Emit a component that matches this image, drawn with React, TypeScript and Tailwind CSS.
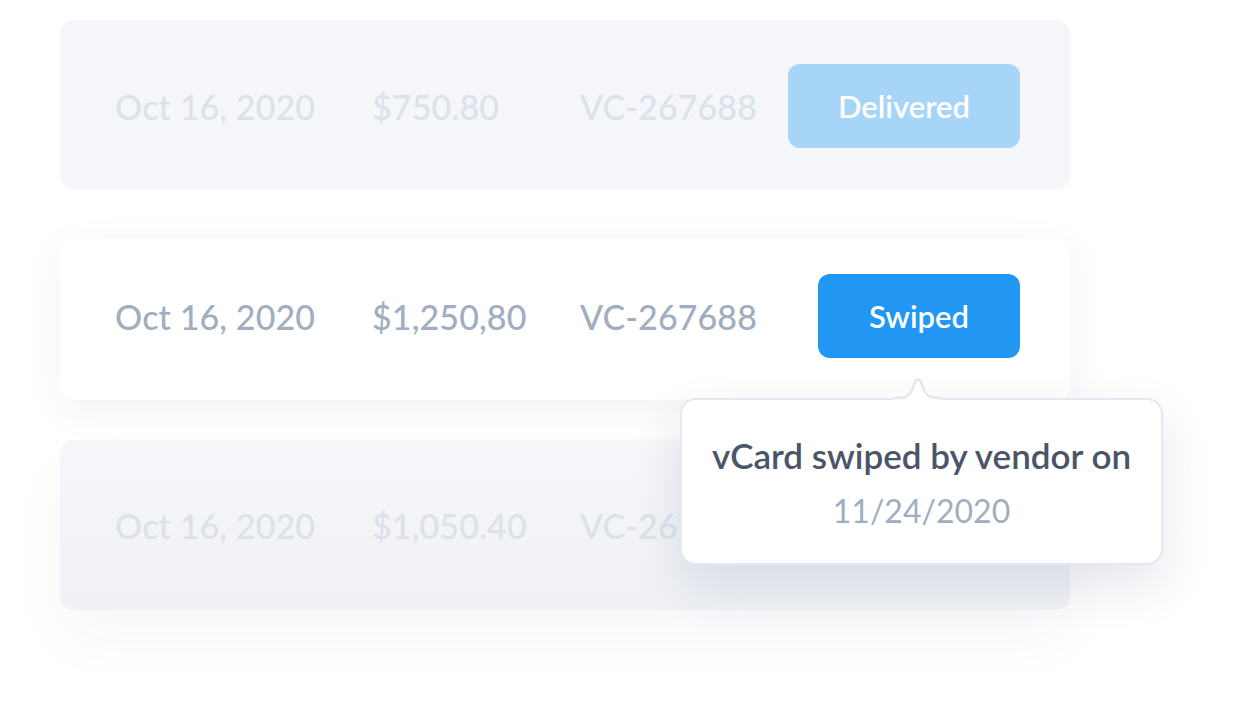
import React from 'react';

const font = { fontFamily: 'Lato, "Open Sans", sans-serif' };

interface RowProps {
  date: string;
  amount: string;
  id: string;
  status: string;
  faded?: boolean;
  buttonClass: string;
  cardClass: string;
}

const Row: React.FC<RowProps> = ({ date, amount, id, status, faded, buttonClass, cardClass }) => (
  <div className={`flex items-center rounded-[14px] pl-[55px] pr-[50px] ${cardClass}`}>
    <div className={`flex items-center text-[34px] font-medium tracking-[0.1px] ${faded ? 'text-[#dde2ea]' : 'text-[#a0aec0]'}`}>
      <span className="w-[257px]">{date}</span>
      <span className="w-[208px]">{amount}</span>
      <span>{id}</span>
    </div>
    <div className="ml-auto">
      <div className={`flex items-center justify-center rounded-[12px] h-[84px] text-[31px] font-semibold text-white ${buttonClass}`}>
        {status}
      </div>
    </div>
  </div>
);

export default function App() {
  return (
    <div className="w-[1260px] h-[727px] bg-white overflow-hidden" style={font}>
      <div className="relative ml-[60px] mt-[20px] w-[1010px] flex flex-col">
        <Row
          date="Oct 16, 2020"
          amount="$750.80"
          id="VC-267688"
          status="Delivered"
          faded
          cardClass="h-[169px] bg-[#f4f6fa] pt-[3px]"
          buttonClass="w-[232px] bg-[#a7d5f8]"
        />
        <div className="mt-[49px]">
          <Row
            date="Oct 16, 2020"
            amount="$1,250,80"
            id="VC-267688"
            status="Swiped"
            cardClass="h-[162px] bg-white shadow-[0_10px_40px_rgba(30,50,90,0.06)] pb-[6px]"
            buttonClass="w-[202px] bg-[#2196f3]"
          />
        </div>
        <div className="mt-[40px]">
          <Row
            date="Oct 16, 2020"
            amount="$1,050.40"
            id="VC-267688"
            status=""
            faded
            cardClass="h-[170px] bg-gradient-to-b from-[#f6f7fa] to-[#eff1f5] shadow-[0_30px_60px_rgba(30,50,90,0.035)]"
            buttonClass="w-0 bg-transparent"
          />
        </div>

        {/* tooltip */}
        <div className="absolute left-[620px] top-[358px] w-[483px]">
          <svg
            className="absolute left-[214px] -top-[1px] z-10"
            width="48"
            height="24"
            viewBox="0 0 48 24"
          >
            <path
              d="M0 22 C10 22 14 22 18 14 L21 6 C22.5 2.5 25.5 2.5 27 6 L30 14 C34 22 38 22 48 22 L48 24 L0 24 Z"
              fill="white"
            />
            <path
              d="M0 21 C10 21 14 21 18 13 L21 5 C22.5 1.5 25.5 1.5 27 5 L30 13 C34 21 38 21 48 21"
              fill="none"
              stroke="#e2e8f0"
              strokeWidth="2.5"
            />
          </svg>
          <div className="mt-[20px] h-[167px] rounded-[16px] border-2 border-[#e2e8f0] bg-white shadow-[0_20px_50px_rgba(30,50,90,0.12)] flex flex-col items-center justify-center pt-[2px]">
            <div className="text-[35px] font-semibold text-[#4a5568] leading-[40px]">vCard swiped by vendor on</div>
            <div className="text-[32px] text-[#a0aec0] leading-[40px] mt-[16px]">11/24/2020</div>
          </div>
        </div>
      </div>
    </div>
  );
}
